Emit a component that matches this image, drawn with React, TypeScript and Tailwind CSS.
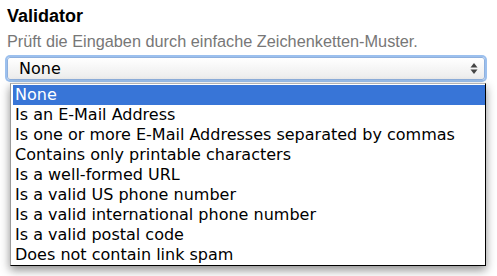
import React from 'react';

const options = [
  'None',
  'Is an E-Mail Address',
  'Is one or more E-Mail Addresses separated by commas',
  'Contains only printable characters',
  'Is a well-formed URL',
  'Is a valid US phone number',
  'Is a valid international phone number',
  'Is a valid postal code',
  'Does not contain link spam',
];

const App: React.FC = () => {
  const selected = 0;

  return (
    <div className="w-[497px] h-[276px] bg-white overflow-hidden pt-[5px] font-['Liberation_Sans',Arial,sans-serif]">
      <h3 className="pl-[7px] text-[18px] leading-[22px] font-bold text-black">Validator</h3>
      <p className="pl-[7px] mt-[4px] text-[16.3px] leading-[20px] text-[#777]">
        Prüft die Eingaben durch einfache Zeichenketten-Muster.
      </p>

      <div className="relative mt-[6px] ml-[7px] w-[478px]">
        {/* select (focused) */}
        <div className="h-[23px] rounded-[3px] border border-[#8fb0dd] ring-2 ring-[#9cc0ee] bg-gradient-to-b from-white to-[#ececec] flex items-center justify-between pl-[11px] pr-[6px] font-['DejaVu_Sans',Verdana,sans-serif] text-[16px] text-black">
          <span className="leading-[20px]">None</span>
          <svg width="8" height="13" viewBox="0 0 8 13" className="text-[#444]">
            <path d="M4 1 L7.5 5.5 L0.5 5.5 Z" fill="currentColor" />
            <path d="M4 12 L7.5 7.5 L0.5 7.5 Z" fill="currentColor" />
          </svg>
        </div>

        {/* open option list */}
        <ul className="absolute left-[3px] top-[26px] w-[476px] bg-white border-l border-t border-l-[#9a9a9a] border-t-[#b5b5b5] border-r border-b border-r-black border-b-black shadow-[0_4px_9px_rgba(0,0,0,0.45)] pl-[2px] pt-[1px] font-['DejaVu_Sans',Verdana,sans-serif] text-[16px] text-black">
          {options.map((o, i) => (
            <li
              key={o}
              className={`h-[20px] leading-[20px] pl-[2px] whitespace-nowrap ${
                i === selected ? 'bg-[#3875d7] text-white' : ''
              }`}
            >
              {o}
            </li>
          ))}
        </ul>
      </div>
    </div>
  );
};

export default App;
